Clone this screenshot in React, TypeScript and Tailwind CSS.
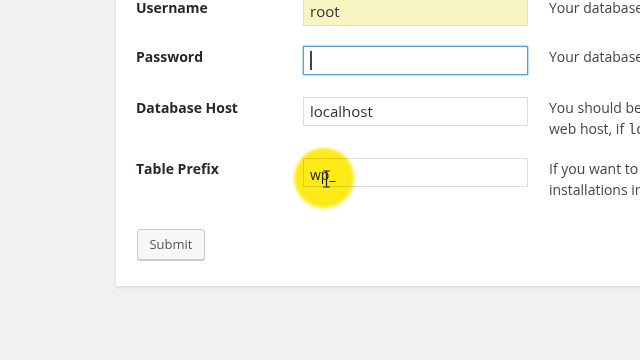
import type React from "react"

const font = { fontFamily: '"Open Sans", "Noto Sans", sans-serif' }

interface RowProps {
  label: string
  rowClass: string
  children: React.ReactNode
  desc: React.ReactNode
}

const Row: React.FC<RowProps> = ({ label, rowClass, children, desc }) => (
  <div className={`flex items-start ${rowClass}`}>
    <div className="w-[167px] shrink-0 text-[14px] leading-[21px] font-bold text-[#23282d]">{label}</div>
    <div className="relative w-[225px] shrink-0">{children}</div>
    <div className="ml-[21px] w-[320px] shrink-0 text-[14px] leading-[21px] text-[#444] whitespace-nowrap">{desc}</div>
  </div>
)

export default function App() {
  return (
    <div className="w-[640px] h-[360px] bg-[#f1f1f1] overflow-hidden" style={font}>
      <div className="ml-[116px] -mt-[3px] w-[600px] bg-white pl-[20px] pb-[26px] shadow-[0_1px_3px_rgba(0,0,0,0.13)]">
        <Row label="Username" rowClass="h-[49px]" desc="Your database username.">
          <div className="h-[29px] border border-[#e4e0b4] bg-[#f9f5c2] px-[6px] text-[15px] leading-[27px] text-[#333]">
            root
          </div>
        </Row>
        <Row label="Password" rowClass="h-[51px]" desc="Your database password.">
          <div className="h-[29px] border border-[#5b9dd9] bg-white shadow-[0_0_2px_rgba(30,140,190,0.8)] px-[6px] flex items-center">
            <div className="w-[2px] h-[19px] bg-[#444]" />
          </div>
        </Row>
        <Row
          label="Database Host"
          rowClass="h-[61px]"
          desc={
            <>
              You should be able to get this info from your
              <br />
              web host, if <code style={{ fontFamily: '"Liberation Mono", monospace' }}>localhost</code> doesn’t work.
            </>
          }
        >
          <div className="h-[29px] border border-[#ddd] bg-white px-[6px] text-[15px] leading-[27px] text-[#333]">
            localhost
          </div>
        </Row>
        <Row
          label="Table Prefix"
          rowClass="h-[71px]"
          desc={
            <>
              If you want to run multiple WordPress
              <br />
              installations in a single database, change this.
            </>
          }
        >
          <div className="h-[29px] border border-[#ddd] bg-white px-[6px] pt-[2px] text-[14px] leading-[27px] text-[#222]">
            wp_
          </div>
          <div className="absolute left-[-9px] top-[-10px] w-[60px] h-[60px] rounded-full bg-[#ffe800] opacity-90 mix-blend-multiply blur-[1.5px]" />
          <svg className="absolute left-[19px] top-[12px]" width="9" height="18" viewBox="0 0 9 18">
            <path d="M1 1h3l.5.5.5-.5h3M4.5 1.5v15M1 17h3l.5-.5.5.5h3" stroke="#222" strokeWidth="1.2" fill="none" />
          </svg>
        </Row>
        <button className="h-[31px] w-[68px] ml-[1px] rounded-[3px] border border-[#ccc] bg-[#f7f7f7] shadow-[0_1px_0_#ccc] text-[13px] text-[#555]">
          Submit
        </button>
      </div>
    </div>
  )
}
